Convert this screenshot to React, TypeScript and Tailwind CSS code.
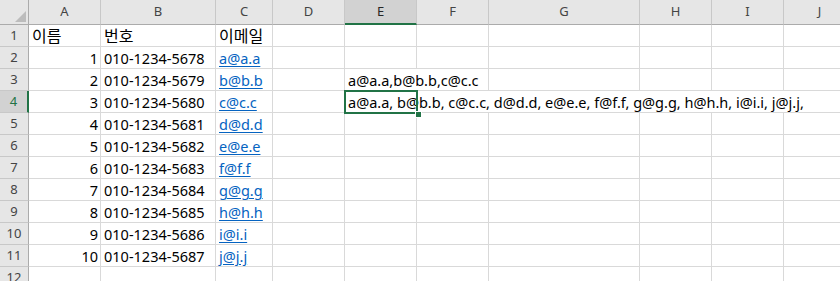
import React from "react";

const FONT = { fontFamily: "'Noto Sans', 'Noto Sans CJK KR', sans-serif" };

const colLetters = ["A", "B", "C", "D", "E", "F", "G", "H", "I", "J"];

function HeaderCell({ label, selected }: { label: string; selected?: boolean }) {
  return (
    <div
      className={
        "h-[25px] flex items-center justify-center text-[13px] border-r border-r-[#c8c8c8] " +
        (selected
          ? "bg-[#d2d2d2] text-[#262626] border-b-2 border-b-[#217346]"
          : "bg-[#e6e6e6] text-[#444444] border-b border-b-[#ababab]")
      }
    >
      {label}
    </div>
  );
}

function RowHead({ n, selected }: { n: number; selected?: boolean }) {
  return (
    <div
      className={
        "h-[22px] flex items-center justify-center text-[13px] border-b border-b-[#c8c8c8] " +
        (selected
          ? "bg-[#d2d2d2] text-[#217346] border-r-2 border-r-[#217346]"
          : "bg-[#e6e6e6] text-[#444444] border-r border-r-[#ababab]")
      }
    >
      {n}
    </div>
  );
}

function Cell({
  children,
  align = "left",
  span,
  link,
  top,
  ko,
}: {
  children?: React.ReactNode;
  align?: "left" | "right";
  span?: "2" | "6";
  link?: boolean;
  top?: boolean;
  ko?: boolean;
}) {
  return (
    <div
      className={
        "relative h-[22px] border-r border-b border-[#d9d9d9] bg-white leading-[22px] whitespace-nowrap text-[#000000] " +
        (ko ? "text-[16px] " : "text-[14.5px] ") +
        (align === "right" ? "text-right pr-[2px] " : "pl-[3px] ") +
        (span === "2" ? "col-span-2 " : span === "6" ? "col-span-6 " : "") +
        (top ? "z-10 " : "")
      }
    >
      {link ? <span className="text-[#0563c1] underline underline-offset-2">{children}</span> : children}
    </div>
  );
}

const rows = Array.from({ length: 10 }, (_, i) => ({
  n: i + 1,
  phone: `010-1234-${5678 + i}`,
  email: `${"abcdefghij"[i]}@${"abcdefghij"[i]}.${"abcdefghij"[i]}`,
}));

export default function App() {
  return (
    <div className="w-[840px] h-[281px] overflow-hidden bg-white" style={FONT}>
      <div className="grid grid-cols-[29px_72px_115px_57px_72px_72px_72px_151px_72px_72px_72px] w-[856px]">
        {/* Corner */}
        <div className="relative h-[25px] bg-[#e6e6e6] border-r border-b border-[#ababab]">
          <svg className="absolute left-[15px] top-[11px]" width="11" height="11" viewBox="0 0 11 11">
            <polygon points="11,0 11,11 0,11" fill="#bcbcbc" />
          </svg>
        </div>
        {colLetters.map((c) => (
          <HeaderCell key={c} label={c} selected={c === "E"} />
        ))}

        {/* Row 1 */}
        <RowHead n={1} />
        <Cell ko>이름</Cell>
        <Cell ko>번호</Cell>
        <Cell ko>이메일</Cell>
        {Array.from({ length: 7 }, (_, i) => (
          <Cell key={i} />
        ))}

        {rows.map((r) => {
          const rowNum = r.n + 1;
          return (
            <React.Fragment key={r.n}>
              <RowHead n={rowNum} selected={rowNum === 4} />
              <Cell align="right">{r.n}</Cell>
              <Cell>{r.phone}</Cell>
              <Cell link>{r.email}</Cell>
              <Cell />
              {rowNum === 3 ? (
                <>
                  <Cell span="2">a@a.a,b@b.b,c@c.c</Cell>
                  <Cell />
                  <Cell />
                  <Cell />
                  <Cell />
                </>
              ) : rowNum === 4 ? (
                <Cell span="6" top>
                  a@a.a, b@b.b, c@c.c, d@d.d, e@e.e, f@f.f, g@g.g, h@h.h, i@i.i, j@j.j,
                  <div className="absolute left-[-1px] top-[-1px] w-[74px] h-[24px] border-2 border-[#217346]" />
                  <div className="absolute left-[70px] top-[20px] w-[7px] h-[7px] bg-white">
                    <div className="m-[1px] w-[5px] h-[5px] bg-[#217346]" />
                  </div>
                </Cell>
              ) : (
                Array.from({ length: 6 }, (_, i) => <Cell key={i} />)
              )}
            </React.Fragment>
          );
        })}

        {/* Row 12 */}
        <RowHead n={12} />
        {Array.from({ length: 10 }, (_, i) => (
          <Cell key={i} />
        ))}
      </div>
    </div>
  );
}
